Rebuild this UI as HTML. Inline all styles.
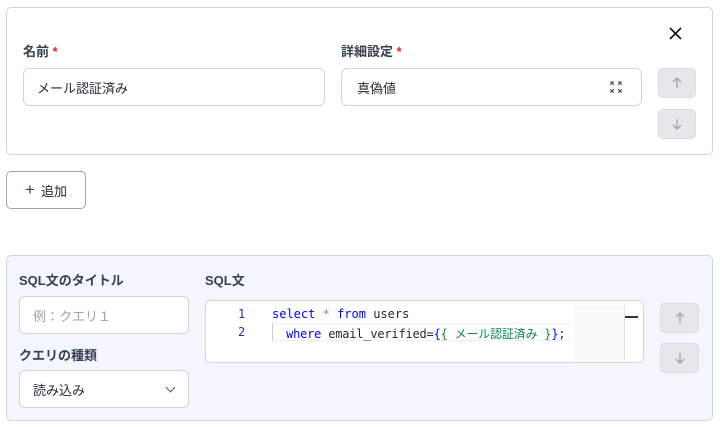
<!DOCTYPE html>
<html><head><meta charset="utf-8"><style>
body{margin:0;width:720px;height:427px;background:#fff;font-family:"Liberation Sans","Noto Sans CJK JP",sans-serif;color:#1f2937;position:relative;overflow:hidden}
.a{position:absolute;box-sizing:border-box}
.lbl{font-size:13px;font-weight:bold;color:#374151}
.inp{border:1px solid #d1d5db;border-radius:6px;background:#fff;font-size:13px;display:flex;align-items:center;padding-left:15px}
.btn{background:#e5e7eb;border:1px solid #d9dce1;border-radius:5px;display:flex;align-items:center;justify-content:center}
.st{color:#dc2626}
.code{font-family:"DejaVu Sans Mono","Liberation Mono","Noto Sans CJK JP",monospace;font-size:12px}
</style></head><body>
<div class="a" style="left:6px;top:7px;width:707px;height:148px;border:1px solid #d1d5db;border-radius:5px"></div>
<svg class="a" style="left:669px;top:27px" width="13" height="13" viewBox="0 0 13 13"><path d="M1 1L12 12M12 1L1 12" stroke="#111" stroke-width="1.6"/></svg>
<div class="a lbl" style="left:23px;top:41px">名前 <span class="st">*</span></div>
<div class="a lbl" style="left:341px;top:41px">詳細設定 <span class="st">*</span></div>
<div class="a inp" style="left:23px;top:68px;width:302px;height:38px;padding-left:13px">メール認証済み</div>
<div class="a inp" style="left:341px;top:68px;width:301px;height:38px">真偽値
<svg style="position:absolute;right:19px;top:12px" width="12" height="12" viewBox="0 0 12 12" fill="none" stroke="#444" stroke-width="1"><path d="M1 4V1H4M8 1H11V4M11 8V11H8M4 11H1V8M1 1L4 4M11 1L8 4M11 11L8 8M1 11L4 8"/></svg></div>
<div class="a btn" style="left:658px;top:68px;width:38px;height:30px"><svg width="10" height="12" viewBox="0 0 10 12" fill="none" stroke="#9ca3af" stroke-width="1.3"><path d="M5 11V1M1 5L5 1L9 5"/></svg></div>
<div class="a btn" style="left:658px;top:109px;width:38px;height:30px"><svg width="10" height="12" viewBox="0 0 10 12" fill="none" stroke="#9ca3af" stroke-width="1.3"><path d="M5 1V11M1 7L5 11L9 7"/></svg></div>
<div class="a" style="left:6px;top:171px;width:80px;height:38px;border:1px solid #9ca3af;border-radius:5px;font-size:13px;display:flex;align-items:center;justify-content:center;gap:6px"><span style="font-size:17px;color:#374151">+</span>追加</div>

<div class="a" style="left:6px;top:255px;width:707px;height:166px;border:1px solid #d1d5db;border-radius:5px;background:#f4f6fd"></div>
<div class="a lbl" style="left:19px;top:270px">SQL文のタイトル</div>
<div class="a lbl" style="left:205px;top:270px">SQL文</div>
<div class="a inp" style="left:19px;top:296px;width:170px;height:38px;color:#9ca3af;padding-left:13px">例：クエリ１</div>
<div class="a lbl" style="left:19px;top:345px">クエリの種類</div>
<div class="a inp" style="left:19px;top:370px;width:170px;height:38px;padding-left:13px">読み込み<span style="position:absolute;right:14px;top:13px;width:6px;height:6px;border-right:1.5px solid #555;border-bottom:1.5px solid #555;transform:rotate(45deg)"></span></div>
<div class="a" style="left:205px;top:300px;width:439px;height:63px;border:1px solid #d1d5db;border-radius:5px;background:#fff"></div>
<div class="a code" style="left:238px;top:307px;color:#1e3a8a">1</div>
<div class="a code" style="left:238px;top:325px;color:#1e3a8a">2</div>
<div class="a" style="left:272px;top:323px;width:300px;height:18px;border-left:1px solid #ccc;border-top:1px solid #eee;border-bottom:1px solid #eee"></div>
<div class="a code" style="left:272px;top:307px;white-space:pre"><span style="color:#0000ff">select</span> <span style="color:#888">*</span> <span style="color:#0000ff">from</span> users</div>
<div class="a code" style="left:272px;top:325px;white-space:pre;letter-spacing:-0.2px">  <span style="color:#0000ff">where</span> email_verified=<span style="color:#0000ff">{</span><span style="color:#098658">{ メール認証済み }</span><span style="color:#0000ff">}</span>;</div>
<div class="a" style="left:574px;top:305px;width:51px;height:56px;background:#fafafa;border-right:1px solid #e5e5e5"></div>
<div class="a" style="left:625px;top:316px;width:13px;height:2px;background:#333"></div>
<div class="a btn" style="left:660px;top:303px;width:39px;height:30px"><svg width="10" height="12" viewBox="0 0 10 12" fill="none" stroke="#9ca3af" stroke-width="1.3"><path d="M5 11V1M1 5L5 1L9 5"/></svg></div>
<div class="a btn" style="left:660px;top:343px;width:39px;height:30px"><svg width="10" height="12" viewBox="0 0 10 12" fill="none" stroke="#9ca3af" stroke-width="1.3"><path d="M5 1V11M1 7L5 11L9 7"/></svg></div>
</body></html>
